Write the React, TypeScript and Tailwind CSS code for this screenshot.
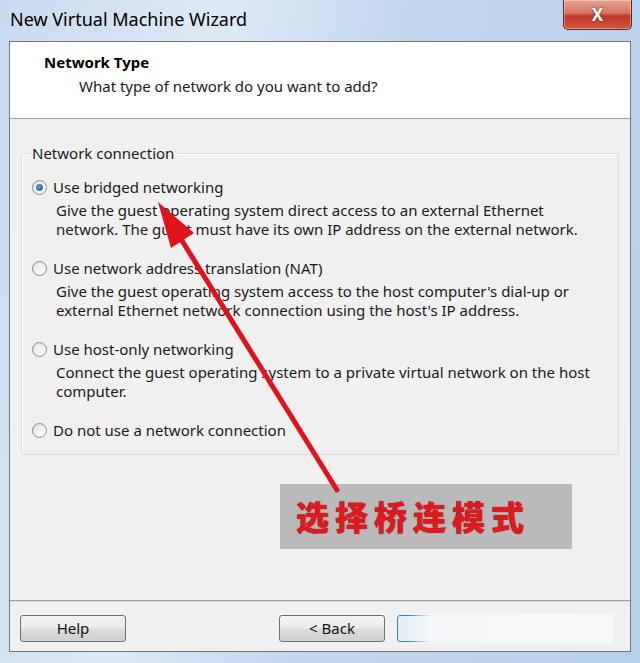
import React from 'react';

const font = { fontFamily: '"Noto Sans", "Open Sans", sans-serif' };

function Radio({ checked = false }: { checked?: boolean }) {
  return (
    <span className="relative flex h-[15px] w-[15px] shrink-0 items-center justify-center rounded-full border border-[#8e8f8f] bg-gradient-to-br from-[#d6d6d6] to-[#f9f9f9]">
      <span className="h-[11px] w-[11px] rounded-full bg-gradient-to-br from-[#e4e4e4] to-[#ffffff]" />
      {checked && (
        <span className="absolute h-[7px] w-[7px] rounded-full border border-[#1b4f7e] bg-gradient-to-br from-[#7cc0ef] to-[#1a5b93]" />
      )}
    </span>
  );
}

function Option({ label, lines, checked }: { label: string; lines: string[]; checked?: boolean }) {
  return (
    <div className="flex flex-col">
      <div className="flex h-[20px] items-center gap-[6px]">
        <Radio checked={checked} />
        <span>{label}</span>
      </div>
      {lines.length > 0 && (
        <div className="ml-[24px] mt-[4px] leading-[19px]">
          {lines.map((l) => (
            <div key={l}>{l}</div>
          ))}
        </div>
      )}
    </div>
  );
}

function WinButton({ children }: { children: React.ReactNode }) {
  return (
    <div className="flex h-[27px] w-[106px] items-center justify-center rounded-[3px] border border-[#707070] bg-[linear-gradient(#f2f2f2_0%,#ebebeb_48%,#dddddd_52%,#cfcfcf_100%)] text-[15px] text-[#111]">
      {children}
    </div>
  );
}

export default function App() {
  return (
    <div
      className="relative h-[663px] w-[640px] overflow-hidden bg-[linear-gradient(100deg,#c9dbef_0%,#dde9f6_30%,#c2d7ee_55%,#b7d0ea_100%)] text-[#1a1a1a]"
      style={font}
    >
      {/* title bar */}
      <div className="flex h-[41px] items-center pl-[10px] pb-[3px] text-[18px] text-black">
        New Virtual Machine Wizard
      </div>
      <div className="absolute right-[8px] top-0 flex h-[30px] w-[69px] items-center justify-center rounded-b-[5px] border border-t-0 border-[#5a2a25] bg-[linear-gradient(#e8a396_0%,#d8735f_45%,#c0382a_55%,#d2553e_100%)] shadow-[inset_0_0_0_1px_rgba(255,255,255,0.35)]">
        <span className="text-[17px] font-bold leading-none text-white [text-shadow:0_0_2px_#4a1410]">X</span>
      </div>

      {/* client area */}
      <div className="mx-[9px] flex h-[611px] flex-col border border-[#6b7785]">
        <div className="h-[77px] border-b border-[#a0a0a0] bg-white pl-[34px] pt-[10px]">
          <div className="text-[15px] font-bold leading-[20px] text-black">Network Type</div>
          <div className="ml-[35px] mt-[4px] text-[15px] leading-[20px]">What type of network do you want to add?</div>
        </div>

        <div className="flex flex-1 flex-col bg-[#f0f0f0] px-[11px] pt-[34px] text-[15px]">
          <div className="relative h-[302px] rounded-[3px] border border-[#d5dfe5] px-[10px] pt-[23px] shadow-[inset_1px_1px_0_#ffffff]">
            <span className="absolute -top-[11px] left-[7px] bg-[#f0f0f0] px-[3px] leading-[20px]">Network connection</span>
            <div className="flex flex-col gap-[19px]">
              <Option
                checked
                label="Use bridged networking"
                lines={[
                  'Give the guest operating system direct access to an external Ethernet',
                  'network. The guest must have its own IP address on the external network.',
                ]}
              />
              <Option
                label="Use network address translation (NAT)"
                lines={[
                  "Give the guest operating system access to the host computer's dial-up or",
                  "external Ethernet network connection using the host's IP address.",
                ]}
              />
              <Option
                label="Use host-only networking"
                lines={[
                  'Connect the guest operating system to a private virtual network on the host',
                  'computer.',
                ]}
              />
              <Option label="Do not use a network connection" lines={[]} />
            </div>
          </div>

          <div
            className="ml-[259px] mt-[29px] flex h-[65px] w-[292px] items-center bg-[#bababa] pl-[16px] text-[33px] font-black tracking-[6px] text-[#dc1a20] [text-shadow:0_0_1px_#7a0a0e]"
            style={{ fontFamily: '"Noto Sans CJK SC", sans-serif' }}
          >
            选择桥连模式
          </div>
        </div>

        <div className="flex h-[50px] items-start border-t border-[#dfdfdf] bg-[#f0f0f0] pl-[10px] pt-[13px] shadow-[0_-1px_0_#a0a0a0]">
          <WinButton>Help</WinButton>
          <div className="ml-[153px]">
            <WinButton>&lt; Back</WinButton>
          </div>
          <div className="relative ml-[12px] h-[27px] w-[215px] rounded-[3px] border border-[#3c7fb1] bg-[#e3eef7]">
            <div className="absolute -inset-[2px] bg-[linear-gradient(90deg,rgba(246,248,250,0)_0%,rgba(246,248,250,0)_5%,rgba(246,248,250,0.96)_16%,#f6f8fa_100%)]" />
          </div>
        </div>
      </div>

      {/* annotation arrow */}
      <svg className="pointer-events-none absolute left-0 top-0" width="640" height="663">
        <line x1="337" y1="490" x2="176" y2="231" stroke="#e0131b" strokeWidth="5" strokeLinecap="round" />
        <polygon points="158,202 194,233 171,248" fill="#e0131b" />
      </svg>
    </div>
  );
}
